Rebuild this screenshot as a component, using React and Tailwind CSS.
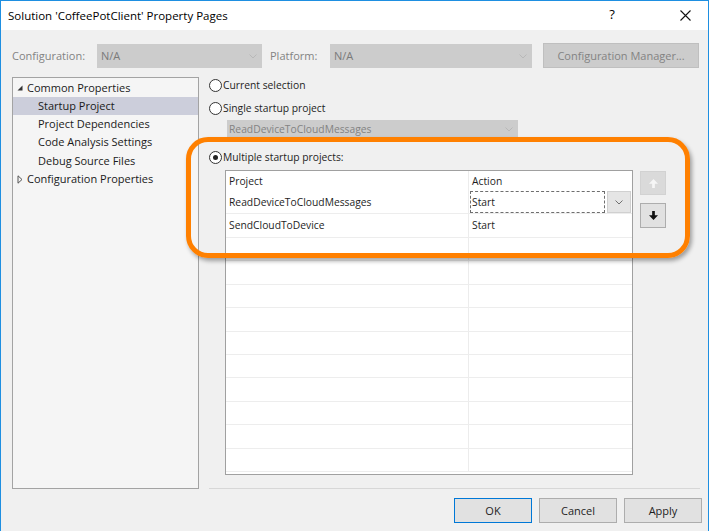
import React from "react";

const font = { fontFamily: '"Open Sans", "Noto Sans", sans-serif' };

function Chevron({ color = "#a8a8a8" }) {
  return (
    <svg width="8" height="5" viewBox="0 0 8 5">
      <path d="M0.5 0.5L4 4L7.5 0.5" fill="none" stroke={color} strokeWidth="1" />
    </svg>
  );
}

function Radio({ checked, label }) {
  return (
    <div className="flex items-center h-[16px]">
      <div className="w-[13px] h-[13px] rounded-full border border-[#333333] bg-white flex items-center justify-center">
        {checked && <div className="w-[5px] h-[5px] rounded-full bg-[#222222]" />}
      </div>
      <span className="ml-[1px] pt-[1px] text-[10.3px] text-[#1e1e1e] leading-none">{label}</span>
    </div>
  );
}

const rowHeights = [23, 24, 23, 24, 23, 24, 23, 23, 24, 23, 24, 23];

export default function App() {
  return (
    <div
      className="relative w-[709px] h-[531px] bg-[#f0f0f0] overflow-hidden"
      style={font}
    >
      {/* title bar */}
      <div className="h-[30px] bg-white flex items-center text-[11.5px] text-black">
        <span className="ml-[8px] pt-[1px]">Solution 'CoffeePotClient' Property Pages</span>
        <span className="ml-auto w-[20px] text-center text-[13px]">?</span>
        <div className="ml-[57px] mr-[18px] w-[12px] h-[12px] flex items-center justify-center">
          <svg width="11" height="11" viewBox="0 0 11 11">
            <path d="M0.5 0.5L10.5 10.5M10.5 0.5L0.5 10.5" stroke="#111" strokeWidth="1.1" />
          </svg>
        </div>
      </div>

      {/* top row */}
      <div className="flex items-center h-[25px] mt-[13px] pl-[12px] text-[11px] text-[#838383]">
        <span className="w-[85px] pt-[1px]">Configuration:</span>
        <div className="w-[165px] h-[24px] bg-[#cccccc] flex items-center pl-[4px] pr-[5px] pt-[1px]">
          <span className="text-[#7a7a7a]">N/A</span>
          <span className="ml-auto"><Chevron color="#b8b8b8" /></span>
        </div>
        <span className="ml-[8px] w-[60px] pt-[1px]">Platform:</span>
        <div className="w-[202px] h-[24px] bg-[#cccccc] flex items-center pl-[4px] pr-[5px] pt-[1px]">
          <span className="text-[#7a7a7a]">N/A</span>
          <span className="ml-auto"><Chevron color="#b8b8b8" /></span>
        </div>
        <div className="ml-[11px] w-[156px] h-[25px] bg-[#cccccc] border border-[#bfbfbf] flex items-center justify-center pt-[1px]">
          Configuration Manager...
        </div>
      </div>

      {/* main area */}
      <div className="flex mt-[9px]">
        {/* tree */}
        <div className="ml-[12px] w-[187px] h-[412px] bg-[#f5f5f5] border border-[#a3a3a3] pt-[1px] text-[11px] text-[#1a1a1a]">
          <div className="flex items-center h-[18px] pl-[4px]">
            <div className="w-[10px] flex items-center">
              <svg width="6" height="6" viewBox="0 0 6 6">
                <path d="M5.5 0.5V5.5H0.5Z" fill="#333" />
              </svg>
            </div>
            <span>Common Properties</span>
          </div>
          <div className="flex items-center h-[18px] pl-[25px] bg-[#cccedb]">Startup Project</div>
          <div className="flex items-center h-[18px] pl-[25px]">Project Dependencies</div>
          <div className="flex items-center h-[18.5px] pl-[25px]">Code Analysis Settings</div>
          <div className="flex items-center h-[18.5px] pl-[25px]">Debug Source Files</div>
          <div className="flex items-center h-[18px] pl-[4px]">
            <div className="w-[10px] flex items-center">
              <svg width="6" height="9" viewBox="0 0 6 9">
                <path d="M1 0.8L5 4.5L1 8.2Z" fill="none" stroke="#555" strokeWidth="1" />
              </svg>
            </div>
            <span>Configuration Properties</span>
          </div>
        </div>

        {/* right column */}
        <div className="ml-[10px] w-[491px] h-[412px] flex flex-col">
          <Radio label="Current selection" />
          <div className="mt-[7px]">
            <Radio label="Single startup project" />
          </div>
          <div className="mt-[4px] ml-[18px] w-[291px] h-[18px] bg-[#cccccc] flex items-center pl-[2px] pr-[5px] pt-[1px] text-[10.3px] text-[#838383]">
            <span>ReadDeviceToCloudMessages</span>
            <span className="ml-auto"><Chevron color="#b8b8b8" /></span>
          </div>
          <div className="mt-[11px]">
            <Radio checked label="Multiple startup projects:" />
          </div>

          <div className="flex items-start mt-[5px] ml-[16px]">
            {/* table */}
            <div className="w-[408px] h-[305px] bg-white border border-[#a0a0a0] overflow-hidden text-[10.3px] text-[#1e1e1e]">
              <div className="flex h-[20px]">
                <div className="w-[243px] border-r border-[#ececec] flex items-center pl-[3px] pt-[1px]">Project</div>
                <div className="flex-1 flex items-center pl-[3px] pt-[1px]">Action</div>
              </div>
              {rowHeights.map((h, i) => (
                <div key={i} className="flex border-b border-[#ededed]" style={{ height: h }}>
                  <div className="w-[243px] border-r border-[#ececec] flex items-center pl-[3px] pt-[1px]">
                    {i === 0 ? "ReadDeviceToCloudMessages" : i === 1 ? "SendCloudToDevice" : ""}
                  </div>
                  <div className="flex-1 flex items-center">
                    {i === 0 && (
                      <>
                        <div className="ml-[1px] w-[135px] h-[22px] border border-dashed border-[#6e6e6e] flex items-center pl-[1px] pt-[1px] self-start">
                          Start
                        </div>
                        <div className="ml-[2px] w-[24px] h-[22px] bg-[#e5e5e5] border border-[#d0d0d0] flex items-center justify-center self-start">
                          <Chevron color="#707070" />
                        </div>
                      </>
                    )}
                    {i === 1 && <span className="pl-[3px] pt-[1px]">Start</span>}
                  </div>
                </div>
              ))}
            </div>

            {/* up/down buttons */}
            <div className="ml-[7px] mt-[1px] flex flex-col">
              <div className="w-[26px] h-[24px] bg-[#dadada] border border-[#d2d2d2] flex items-center justify-center">
                <svg width="9" height="9" viewBox="0 0 8 8">
                  <path d="M2.8 8H5.2V4.2H8L4 0L0 4.2H2.8Z" fill="#f6f6f6" />
                </svg>
              </div>
              <div className="mt-[8px] w-[26px] h-[25px] bg-[#e1e1e1] border border-[#adadad] flex items-center justify-center">
                <svg width="9" height="9" viewBox="0 0 8 8">
                  <path d="M2.8 0H5.2V3.8H8L4 8L0 3.8H2.8Z" fill="#111" />
                </svg>
              </div>
            </div>
          </div>

          <div className="mt-auto h-[1px] bg-[#d7d7d7]" />
        </div>
      </div>

      {/* bottom buttons */}
      <div className="flex justify-end gap-[7px] pr-[7px] mt-[9px] text-[11px] text-[#1e1e1e]">
        <div className="w-[78px] h-[25px] bg-[#e1e1e1] border border-[#0078d7] flex items-center justify-center pt-[1px]">OK</div>
        <div className="w-[78px] h-[25px] bg-[#e1e1e1] border border-[#adadad] flex items-center justify-center pt-[1px]">Cancel</div>
        <div className="w-[78px] h-[25px] bg-[#e1e1e1] border border-[#adadad] flex items-center justify-center pt-[1px]">Apply</div>
      </div>

      {/* orange highlight overlay */}
      <div className="absolute left-[186px] top-[137px] w-[504px] h-[121px] border-[5px] border-[#ff8000] rounded-[22px] shadow-[2px_3px_4px_rgba(0,0,0,0.35)] pointer-events-none" />

      {/* window border */}
      <div className="absolute inset-0 border-l border-r border-t border-[#1e8fe1] pointer-events-none" />
    </div>
  );
}
